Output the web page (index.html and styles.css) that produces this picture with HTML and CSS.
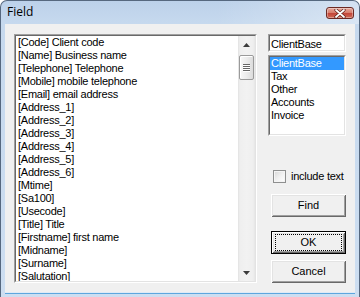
FILE: index.html
```html
<!DOCTYPE html>
<html>
<head>
<meta charset="utf-8">
<link rel="stylesheet" href="styles.css">
</head>
<body>
<div class="window">
  <div class="titlebar">
    <span class="title">Field</span>
    <div class="close">
      <svg width="12" height="9" viewBox="0 0 12 9">
        <path d="M2 1 L10 8 M10 1 L2 8" stroke="#5a1d16" stroke-width="3.2" stroke-linecap="round"/>
        <path d="M2 1 L10 8 M10 1 L2 8" stroke="#ffffff" stroke-width="1.8" stroke-linecap="round"/>
      </svg>
    </div>
  </div>
  <div class="client">
    <div class="sunken mainlist">
      <div class="inner mainlist-inner">
        <ul class="items">
          <li>[Code] Client code</li>
          <li>[Name] Business name</li>
          <li>[Telephone] Telephone</li>
          <li>[Mobile] mobile telephone</li>
          <li>[Email] email address</li>
          <li>[Address_1]</li>
          <li>[Address_2]</li>
          <li>[Address_3]</li>
          <li>[Address_4]</li>
          <li>[Address_5]</li>
          <li>[Address_6]</li>
          <li>[Mtime]</li>
          <li>[Sa100]</li>
          <li>[Usecode]</li>
          <li>[Title] Title</li>
          <li>[Firstname] first name</li>
          <li>[Midname]</li>
          <li>[Surname]</li>
          <li>[Salutation]</li>
        </ul>
        <div class="vscroll">
          <div class="sb-btn">
            <svg width="7" height="4" viewBox="0 0 7 4"><path d="M3.5 0 L7 4 L0 4 Z" fill="#3c3c3c"/></svg>
          </div>
          <div class="track">
            <div class="thumb">
              <span class="grip"></span><span class="grip"></span><span class="grip"></span><span class="grip"></span>
            </div>
          </div>
          <div class="sb-btn">
            <svg width="7" height="4" viewBox="0 0 7 4"><path d="M0 0 L7 0 L3.5 4 Z" fill="#3c3c3c"/></svg>
          </div>
        </div>
      </div>
    </div>
    <div class="side">
      <div class="sunken edit">
        <div class="inner edit-inner">ClientBase</div>
      </div>
      <div class="sunken smalllist">
        <ul class="inner items small-items">
          <li class="selected">ClientBase</li>
          <li>Tax</li>
          <li>Other</li>
          <li>Accounts</li>
          <li>Invoice</li>
        </ul>
      </div>
      <label class="check"><span class="box"></span><span class="check-label">include text</span></label>
      <button class="btn find">Find</button>
      <button class="btn default"><span class="focus">OK</span></button>
      <button class="btn cancel">Cancel</button>
    </div>
  </div>
</div>
</body>
</html>
```

FILE: styles.css
```css
* { box-sizing: border-box; }
html, body { margin: 0; padding: 0; }
body {
  width: 360px;
  height: 297px;
  overflow: hidden;
  background: #ffffff;
  font-family: "Liberation Sans", Arial, sans-serif;
  font-size: 11px;
  color: #000;
}

.window {
  width: 360px;
  height: 297px;
  border: 1px solid #56687f;
  border-bottom: none;
  border-radius: 7px 7px 0 0;
  background: linear-gradient(to bottom, #bcd1ea 0, #c6d9ee 22px, #cddef1 100%);
  padding: 0 4px;
  display: flex;
  flex-direction: column;
  overflow: hidden;
}

.titlebar {
  height: 23px;
  flex: none;
  display: flex;
  align-items: flex-start;
  background: linear-gradient(to right, rgba(255,255,255,0) 60%, rgba(255,255,255,0.35) 100%);
  margin: 0 -4px;
  padding: 0 5px 0 6px;
}
.title {
  font-family: "Open Sans", "Noto Sans", sans-serif;
  font-size: 12px;
  line-height: 22px;
  color: #000;
}
.close {
  margin-left: auto;
  margin-top: 6px;
  width: 28px;
  height: 12px;
  border: 1px solid #6b2a24;
  border-radius: 3px;
  background: linear-gradient(to bottom, #e6a89c 0%, #d9806f 45%, #c4473a 55%, #cf6a55 100%);
  box-shadow: inset 0 0 0 1px rgba(255,255,255,0.35);
  display: flex;
  align-items: center;
  justify-content: center;
}
.close svg { display: block; }

.client {
  height: 268px;
  flex: none;
  background: #f0f0f0;
  display: flex;
  align-items: flex-start;
  padding: 10px 0 0 9px;
  box-shadow: 0 1px 0 #dfeaf6, 0 2px 0 #5ea6dd;
}

.sunken {
  border: 1px solid;
  border-color: #a0a0a0 #ffffff #ffffff #a0a0a0;
}
.inner {
  border: 1px solid;
  border-color: #696969 #e3e3e3 #e3e3e3 #696969;
  height: 100%;
  background: #ffffff;
}

.mainlist { width: 243px; height: 249px; }
.mainlist-inner { display: flex; overflow: hidden; }

.items {
  list-style: none;
  margin: 0;
  padding: 0;
  line-height: 13px;
  white-space: nowrap;
  letter-spacing: -0.25px;
}
.mainlist-inner .items {
  flex: 1;
  overflow: hidden;
  padding-left: 2px;
}

.vscroll {
  width: 17px;
  flex: none;
  display: flex;
  flex-direction: column;
  background: linear-gradient(to right, #e2e2e2 0, #efefef 2px, #f2f2f2 50%, #efefef 15px, #e6e6e6 17px);
}
.sb-btn {
  height: 17px;
  flex: none;
  display: flex;
  align-items: center;
  justify-content: center;
}
.sb-btn svg { display: block; }
.track {
  flex: 1;
  padding: 2px 1px 0 1px;
}
.thumb {
  height: 25px;
  border: 1px solid #9a9a9a;
  border-radius: 2px;
  background: linear-gradient(to right, #f8f8f8 0%, #ececec 50%, #dcdcdc 100%);
  box-shadow: inset 1px 1px 0 #ffffff;
  display: flex;
  flex-direction: column;
  align-items: center;
  justify-content: center;
  gap: 1px;
}
.grip {
  width: 7px;
  height: 1px;
  background: #666666;
  box-shadow: 0 1px 0 #ffffff;
}

.side {
  margin-left: 11px;
  width: 78px;
  display: flex;
  flex-direction: column;
  align-items: flex-start;
}
.edit { width: 78px; height: 18px; }
.edit-inner {
  padding: 1px 1px 0 1px;
  line-height: 14px;
  letter-spacing: -0.25px;
  white-space: nowrap;
}
.smalllist { width: 78px; height: 81px; margin-top: 3px; }
.small-items li { padding-left: 1px; }
.small-items li.selected { background: #3399ff; color: #ffffff; }

.check {
  margin-top: 34px;
  margin-left: 5px;
  height: 13px;
  display: flex;
  align-items: center;
  letter-spacing: -0.25px;
  white-space: nowrap;
}
.box {
  width: 13px;
  height: 13px;
  flex: none;
  border: 1px solid #8e8f8f;
  background: linear-gradient(135deg, #d6d6d6 0%, #f0f0f0 50%, #ffffff 100%);
  box-shadow: inset 0 0 0 1px #f4f4f4;
}
.check-label { margin-left: 5px; line-height: 13px; }

.btn {
  font-family: "Liberation Sans", Arial, sans-serif;
  font-size: 11px;
  color: #000;
  width: 75px;
  height: 23px;
  margin: 0 0 0 3px;
  padding: 0;
  border: none;
  background: #f0f0f0;
  line-height: 21px;
  text-align: center;
  box-shadow: inset 1px 1px 0 #ffffff, inset -1px -1px 0 #696969, inset 2px 2px 0 #e3e3e3, inset -2px -2px 0 #a0a0a0;
}
.find { margin-top: 11px; }
.default {
  margin-top: 14px;
  border: 1px solid #000000;
  padding: 2px 3px;
}
.focus {
  display: block;
  height: 17px;
  border: 1px dotted #000000;
  line-height: 15px;
}
.cancel { margin-top: 6px; }
```
